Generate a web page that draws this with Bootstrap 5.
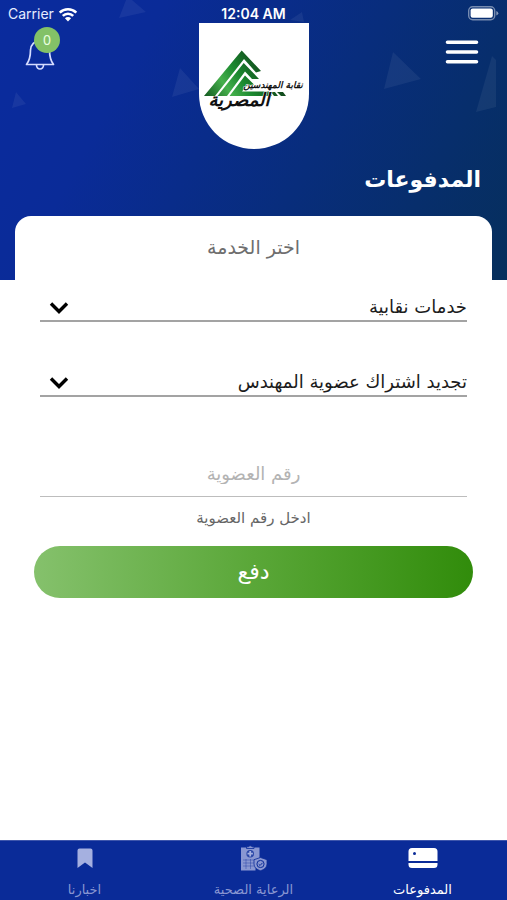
<!DOCTYPE html>
<html lang="ar" dir="rtl">
<head>
<meta charset="utf-8">
<meta name="viewport" content="width=device-width, initial-scale=1">
<title>المدفوعات</title>
<link href="https://cdn.jsdelivr.net/npm/bootstrap@5.3.0/dist/css/bootstrap.min.css" rel="stylesheet">
<style>
  body { font-family: "DejaVu Sans", sans-serif; background: #fff; }
  .hero { background: linear-gradient(118deg, #0a2b9e 0%, #0a2b98 25%, #082d7c 60%, #062f5c 100%); padding-bottom: 84px; }
  .hero-shapes { position: absolute; top: 0; left: 0; width: 100%; height: 120px; pointer-events: none; }
  .status { font-family: Inter, sans-serif; font-size: 14px; line-height: 16px; padding: 6px 8px 1px; color: #e6ebff; }
  .status-time { font-weight: 600; color: #fff; }
  .topbar { padding: 0 20px; }
  .icon-btn { background: none; border: 0; padding: 0; line-height: 0; }
  .menu-btn { margin: 16px 8px 0; }
  .bell-btn { margin: 14px 4px 0; }
  .bell-count { position: absolute; top: -10px; left: 10px; width: 26px; height: 26px; background: #83c167; color: #e9ffe0; font: 14px/26px "Noto Sans", sans-serif; }
  .crest { width: 110px; height: 126px; border-radius: 0 0 55px 55px; background: #fff; }
  .page-title { font-size: 22px; line-height: 32px; font-weight: 700; margin: 15px 26px 0; }
  .sheet { margin: -64px 15px 0; padding: 16px 25px 0; border-radius: 16px 16px 0 0; background: #fff; }
  .sheet-title { font-size: 19px; line-height: 30px; color: #6e6e6e; }
  .line-field { border: 0; border-radius: 0; color: #1c1c1c; font-size: 18px; line-height: 26px; background-color: transparent; box-shadow: none; }
  .line-select { height: 36px; border-bottom: 2px solid #a3a3a3; padding: 8px 0 0 48px; background-size: 20px 14px; background-position: left 9px top 15px;
    background-image: url("data:image/svg+xml,%3Csvg xmlns='http://www.w3.org/2000/svg' viewBox='0 0 20 14'%3E%3Cpath d='M2 2.5l8 8 8-8' fill='none' stroke='%23000' stroke-width='3.4'/%3E%3C/svg%3E"); }
  .line-select + .line-select { margin-top: 39px; }
  .line-input { height: 46px; border-bottom: 1px solid #bdbdbd; padding: 0; text-align: center; margin-top: 54px; }
  .line-input::placeholder { color: #b3b3b3; opacity: 1; }
  .hint { font-size: 15px; line-height: 20px; color: #666; margin-top: 11px; }
  .pay-btn { height: 52px; margin: 18px 18px 0; border: 0; border-radius: 26px; color: #fff; font-size: 22px; line-height: 32px; font-weight: 500; background: linear-gradient(90deg, #85c16c, #5aa738 50%, #318c0b); }
  .tabs { background: #0a2b98; border-top: 1px solid #3e56ac; }
  .tab-link { color: #8997d2; font-size: 13px; line-height: 20px; padding: 4px 0 0; }
  .tab-link svg { display: block; margin: 0 auto 9px; }
  .tab-link.active { color: #fff; }
</style>
<script src="https://cdn.jsdelivr.net/npm/bootstrap@5.3.0/dist/js/bootstrap.bundle.min.js"></script>
</head>
<body class="d-flex flex-column min-vh-100">

<header class="hero position-relative text-white">
  <svg class="hero-shapes" viewBox="0 0 507 120" preserveAspectRatio="none" aria-hidden="true">
    <g fill="#fff" fill-opacity=".06">
      <path d="M126 0h6l14 12-27 6zM180 68l19 21-27 8zM16 92l10 12-14 4zM302 12l2 10-14-2zM393 52l28 27-37 10zM492 56l4 4v47l-20 5z"/>
    </g>
  </svg>

  <div class="status d-flex position-relative" dir="ltr">
    <div class="col d-flex align-items-center gap-1">
      <span>Carrier</span>
      <svg width="20" height="15" viewBox="0 0 20 15" aria-hidden="true"><g fill="none" stroke="#fff" stroke-width="2.6"><path d="M1.7 5.6a12 12 0 0 1 16.6 0"/><path d="M4.8 8.9a7.4 7.4 0 0 1 10.4 0"/></g><path d="M10 14.4l-3.1-3.1a4.4 4.4 0 0 1 6.2 0z" fill="#fff"/></svg>
    </div>
    <div class="col text-center status-time">12:04 AM</div>
    <div class="col d-flex justify-content-end">
      <svg width="31" height="15" viewBox="0 0 31 15" aria-hidden="true"><rect x=".7" y=".7" width="26" height="13" rx="4" fill="none" stroke="#fff" stroke-opacity=".45" stroke-width="1.4"/><rect x="2.6" y="2.6" width="22.2" height="9.2" rx="2" fill="#fff"/><path d="M28.3 5v4.600q2-1 2-2.300t-2-2.300z" fill="#fff" fill-opacity=".5"/></svg>
    </div>
  </div>

  <div class="topbar d-flex position-relative">
    <div class="col d-flex justify-content-start align-items-start">
      <button type="button" class="icon-btn menu-btn" aria-label="القائمة">
        <svg width="34" height="26" viewBox="0 0 34 26"><path d="M2.500 3.200h29M2.500 13h29M2.500 22.800h29" stroke="#fff" stroke-width="3.600" stroke-linecap="round"/></svg>
      </button>
    </div>
    <div class="crest">
      <svg width="110" height="126" viewBox="0 0 110 126" role="img" aria-label="نقابة المهندسين المصرية">
        <defs><linearGradient id="leaf" gradientUnits="userSpaceOnUse" x1="5" y1="73" x2="60" y2="35"><stop offset="0" stop-color="#12591f"/><stop offset=".35" stop-color="#46b04c"/><stop offset=".6" stop-color="#1c8a30"/><stop offset="1" stop-color="#11491c"/></linearGradient></defs>
        <g fill="url(#leaf)">
          <path d="M5 73L42.700 27.500 62 48l-5 1.500L45 36 16 73z"/>
          <path d="M18.500 73L44.700 40 60 56h-7l-7-7.500L28 73z"/>
          <path d="M30.500 73L46 52.500l9 9-8 2-4 5h27l3 4.500z"/>
          <path d="M72 69h4l3 4h-4zM78 69h6l3 4h-5z"/>
        </g>
        <g font-family="DejaVu Sans, sans-serif" font-weight="700" font-style="italic" fill="#111" stroke="#fff" stroke-width="1" paint-order="stroke" text-anchor="middle">
          <text x="74" y="65" font-size="9">نقابة المهندسين</text>
          <text x="40" y="83" font-size="18">المصرية</text>
        </g>
      </svg>
    </div>
    <div class="col d-flex justify-content-end align-items-start">
      <button type="button" class="icon-btn bell-btn position-relative" aria-label="الإشعارات">
        <svg width="32" height="34" viewBox="0 0 32 34" fill="none" stroke="#d5dcff" stroke-width="1.700" stroke-linejoin="round"><path d="M2.500 27.500C6 23 6.500 19 6.500 13a9.500 9.500 0 0 1 19 0c0 6 .5 10 4 14.500z"/><path d="M12.500 28a3.500 4 0 0 0 7 0"/></svg>
        <span class="bell-count rounded-circle text-center">0</span>
      </button>
    </div>
  </div>

  <h1 class="page-title position-relative">المدفوعات</h1>
</header>

<main class="flex-grow-1 position-relative">
  <form>
    <div class="sheet">
      <label for="service" class="sheet-title d-block text-center">اختر الخدمة</label>
      <select id="service" class="form-select line-field line-select mt-4">
        <option>خدمات نقابية</option>
      </select>
      <select class="form-select line-field line-select" aria-label="نوع الخدمة">
        <option>تجديد اشتراك عضوية المهندس</option>
      </select>
      <input id="member" type="text" inputmode="numeric" class="form-control line-field line-input" placeholder="رقم العضوية">
      <label for="member" class="hint d-block text-center">ادخل رقم العضوية</label>
    </div>
    <div class="d-grid px-3"><button type="submit" class="btn pay-btn">دفع</button></div>
  </form>
</main>

<nav class="tabs d-flex text-center">
  <a href="#" class="tab-link active col text-decoration-none" aria-current="page">
    <svg width="30" height="26" viewBox="0 0 30 26"><path d="M4 3h22a3.500 3.500 0 0 1 3.500 3.500V16H.5V6.500A3.500 3.500 0 0 1 4 3zM.5 18h29v1.500A3.500 3.500 0 0 1 26 23H4a3.500 3.500 0 0 1-3.500-3.500z" fill="#fff"/><circle cx="6.500" cy="8.500" r="1.500" fill="#0a2b98"/></svg>
    المدفوعات
  </a>
  <a href="#" class="tab-link col text-decoration-none">
    <svg width="28" height="26" viewBox="0 0 28 26"><path d="M1 2.500h18.500V14l-4 2v9.500H1z" fill="#8997d2"/><path d="M6.500 3.500V1.800h2a2 2 0 0 1 3.500 0h2v1.700z" fill="#8997d2" stroke="#0a2b98" stroke-width=".8"/><circle cx="10.200" cy="8.700" r="3.800" fill="#0a2b98" fill-opacity=".75"/><path d="M10.200 6v5.400M7.500 8.700h5.400" stroke="#a5b0e0" stroke-width="1.800"/><path d="M3 15h13M3 18h11M3 21h11M6 14v10M10.500 14v10" stroke="#0a2b98" stroke-opacity=".4" stroke-width=".9"/><path d="M20.500 12.500l6.500 2.200v4c0 3.800-3 6-6.500 7-3.500-1-6.500-3.200-6.500-7v-4z" fill="#8997d2" stroke="#0a2b98" stroke-width=".8"/><circle cx="20.500" cy="19" r="3.600" fill="none" stroke="#0a2b98"/><path d="M18.700 19.200l1.400 1.300 2.400-2.700" fill="none" stroke="#0a2b98"/></svg>
    الرعاية الصحية
  </a>
  <a href="#" class="tab-link col text-decoration-none">
    <svg width="16" height="26" viewBox="0 0 16 26"><path d="M2.500 3.500h11a2 2 0 0 1 2 2V23L8 17.500.5 23V5.500a2 2 0 0 1 2-2z" fill="#a5b0e0"/></svg>
    اخبارنا
  </a>
</nav>
</body>
</html>
